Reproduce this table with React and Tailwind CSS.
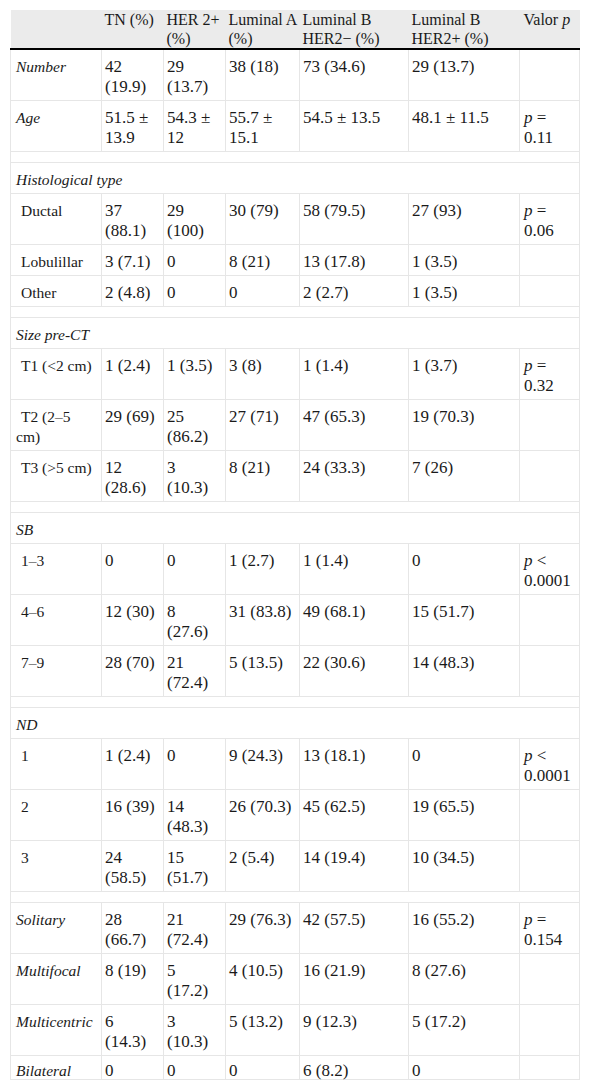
import React from "react";

const P = ({ op, v }) => (
  <>
    <i>p</i> {op} {v}
  </>
);

const rows = [
  { type: "row", label: "Number", italic: true, cells: ["42 (19.9)", "29 (13.7)", "38 (18)", "73 (34.6)", "29 (13.7)", ""] },
  { type: "row", label: "Age", italic: true, cells: ["51.5 ± 13.9", "54.3 ± 12", "55.7 ± 15.1", "54.5 ± 13.5", "48.1 ± 11.5", <P op="=" v="0.11" />] },
  { type: "spacer" },
  { type: "section", label: "Histological type" },
  { type: "row", label: "Ductal", sub: true, cells: ["37 (88.1)", "29 (100)", "30 (79)", "58 (79.5)", "27 (93)", <P op="=" v="0.06" />] },
  { type: "row", label: "Lobulillar", sub: true, cells: ["3 (7.1)", "0", "8 (21)", "13 (17.8)", "1 (3.5)", ""] },
  { type: "row", label: "Other", sub: true, cells: ["2 (4.8)", "0", "0", "2 (2.7)", "1 (3.5)", ""] },
  { type: "spacer" },
  { type: "section", label: "Size pre-CT" },
  { type: "row", label: "T1 (<2 cm)", sub: true, cells: ["1 (2.4)", "1 (3.5)", "3 (8)", "1 (1.4)", "1 (3.7)", <P op="=" v="0.32" />] },
  { type: "row", label: "T2 (2–5 cm)", sub: true, cells: ["29 (69)", "25 (86.2)", "27 (71)", "47 (65.3)", "19 (70.3)", ""] },
  { type: "row", label: "T3 (>5 cm)", sub: true, cells: ["12 (28.6)", "3 (10.3)", "8 (21)", "24 (33.3)", "7 (26)", ""] },
  { type: "spacer" },
  { type: "section", label: "SB" },
  { type: "row", label: "1–3", sub: true, cells: ["0", "0", "1 (2.7)", "1 (1.4)", "0", <P op="<" v="0.0001" />] },
  { type: "row", label: "4–6", sub: true, cells: ["12 (30)", "8 (27.6)", "31 (83.8)", "49 (68.1)", "15 (51.7)", ""] },
  { type: "row", label: "7–9", sub: true, cells: ["28 (70)", "21 (72.4)", "5 (13.5)", "22 (30.6)", "14 (48.3)", ""] },
  { type: "spacer" },
  { type: "section", label: "ND" },
  { type: "row", label: "1", sub: true, cells: ["1 (2.4)", "0", "9 (24.3)", "13 (18.1)", "0", <P op="<" v="0.0001" />] },
  { type: "row", label: "2", sub: true, cells: ["16 (39)", "14 (48.3)", "26 (70.3)", "45 (62.5)", "19 (65.5)", ""] },
  { type: "row", label: "3", sub: true, cells: ["24 (58.5)", "15 (51.7)", "2 (5.4)", "14 (19.4)", "10 (34.5)", ""] },
  { type: "spacer" },
  { type: "row", label: "Solitary", italic: true, cells: ["28 (66.7)", "21 (72.4)", "29 (76.3)", "42 (57.5)", "16 (55.2)", <P op="=" v="0.154" />] },
  { type: "row", label: "Multifocal", italic: true, cells: ["8 (19)", "5 (17.2)", "4 (10.5)", "16 (21.9)", "8 (27.6)", ""] },
  { type: "row", label: "Multicentric", italic: true, cells: ["6 (14.3)", "3 (10.3)", "5 (13.2)", "9 (12.3)", "5 (17.2)", ""] },
  { type: "row", label: "Bilateral", italic: true, last: true, cells: ["0", "0", "0", "6 (8.2)", "0", ""] },
];

const headers = ["TN (%)", "HER 2+ (%)", "Luminal A (%)", "Luminal B HER2− (%)", "Luminal B HER2+ (%)"];

// right padding per data column, tuned so the wraps land where the original's do
const padR = ["pr-[7px]", "pr-[7px]", "pr-[6px]", "pr-[6px]", "pr-[6px]", "pr-[7px]"];
const padL = ["pl-[3px]", "pl-[3px]", "pl-[3px]", "pl-[3px]", "pl-[3px]", "pl-[4px]"];

export default function App() {
  return (
    <div className="bg-white w-[590px] h-[1092px] pt-[10px] pl-[10px] overflow-hidden">
      <table className="table-fixed border-collapse w-[569px] font-['Liberation_Serif','Times_New_Roman',serif] text-[17px] leading-[20px] text-[#1a1a1a]">
        <colgroup>
          <col className="w-[91px]" />
          <col className="w-[62px]" />
          <col className="w-[62px]" />
          <col className="w-[74px]" />
          <col className="w-[109px]" />
          <col className="w-[111px]" />
          <col className="w-[60px]" />
        </colgroup>
        <thead>
          <tr className="bg-[#ebebeb]">
            <th className="border-b-2 border-b-black" />
            {headers.map((h, j) => (
              <th
                key={h}
                className={`border-b-2 border-b-black text-left font-normal align-top text-[16px] leading-[19px] pt-0 pb-0 pr-0 ${padL[j]}`}
              >
                {h}
              </th>
            ))}
            <th className="border-b-2 border-b-black text-left font-normal align-top text-[16px] leading-[19px] pt-0 pb-0 pl-[4px] pr-0">
              Valor <i>p</i>
            </th>
          </tr>
        </thead>
        <tbody>
          {rows.map((r, i) => {
            if (r.type === "spacer")
              return (
                <tr key={i}>
                  <td colSpan={7} className="h-[11px] p-0 border border-[#e6e6e6]" />
                </tr>
              );
            if (r.type === "section")
              return (
                <tr key={i}>
                  <td colSpan={7} className="border border-[#e6e6e6] italic text-[15.5px] pl-[5px] pt-[7px] pb-[3px] align-top">
                    {r.label}
                  </td>
                </tr>
              );
            const pad = r.last ? "pt-[7px] pb-0 leading-[16px]" : "pt-[7px] pb-[3px]";
            return (
              <tr key={i}>
                <td
                  className={`border border-[#e6e6e6] text-[15.5px] pl-[5px] pr-[7px] align-top ${pad} ${r.italic ? "italic" : ""} ${r.sub ? "indent-[5px]" : ""}`}
                >
                  {r.label}
                </td>
                {r.cells.map((c, j) => (
                  <td key={j} className={`border border-[#e6e6e6] align-top ${padL[j]} ${padR[j]} ${pad}`}>
                    {c}
                  </td>
                ))}
              </tr>
            );
          })}
        </tbody>
      </table>
    </div>
  );
}
